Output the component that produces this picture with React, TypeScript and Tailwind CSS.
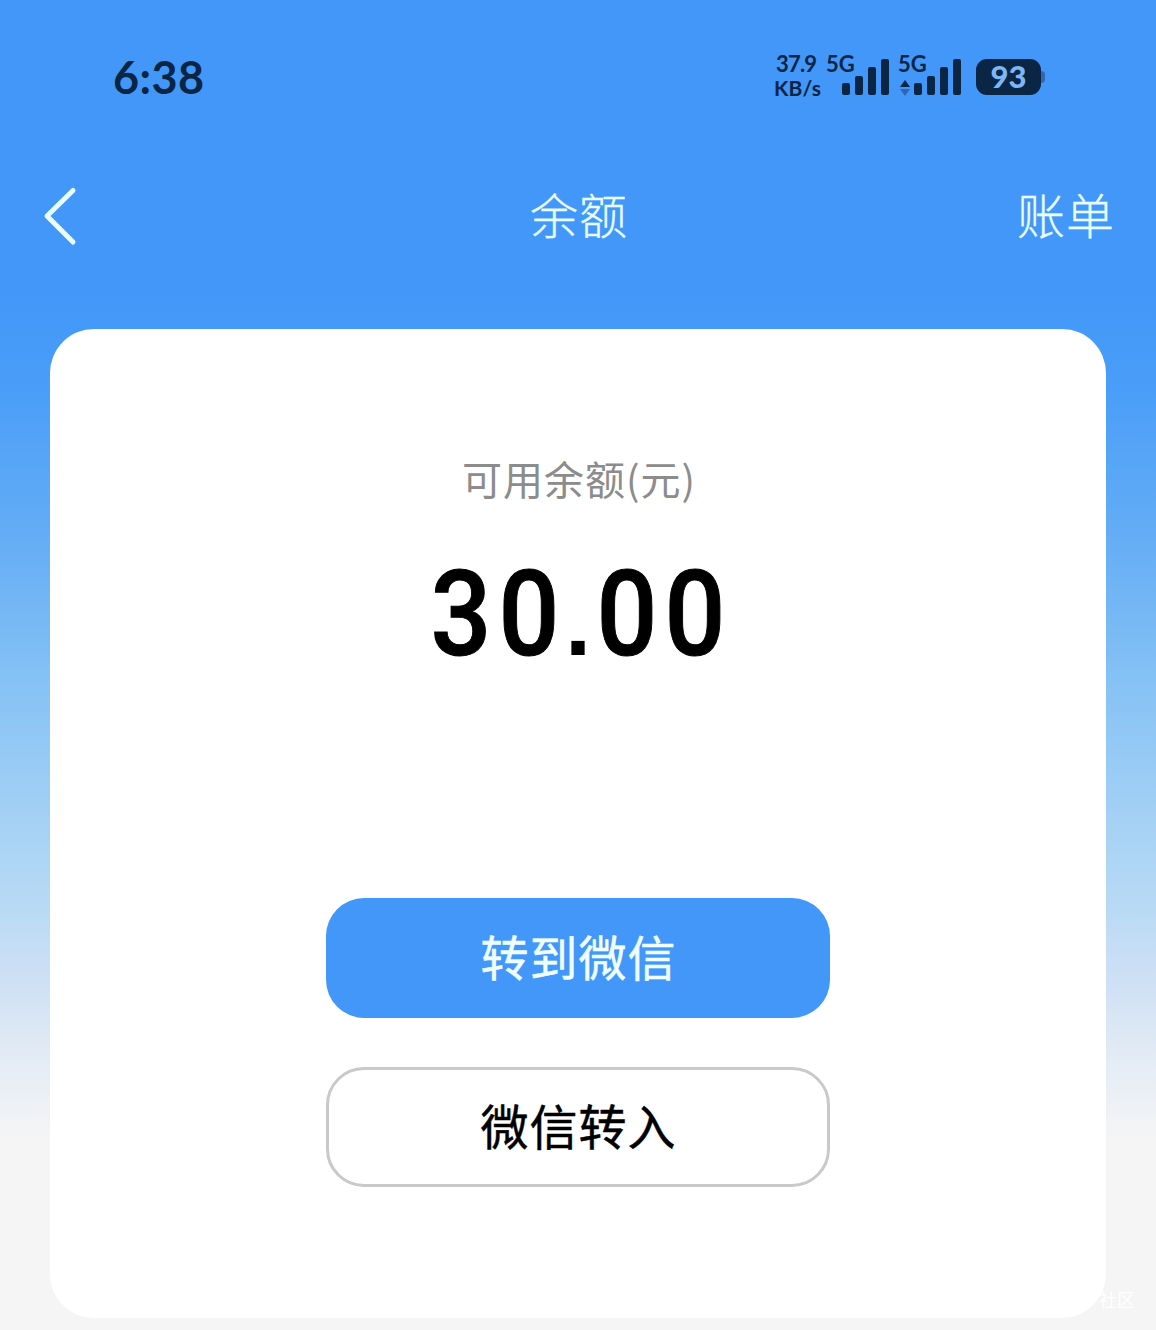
function SignalBars() {
  return (
    <svg width="47" height="37" viewBox="0 0 47 37" fill="#0b2545">
      <rect x="0" y="24" width="8" height="12" rx="2" />
      <rect x="13" y="17" width="8" height="19" rx="2" />
      <rect x="26" y="8" width="8" height="28" rx="2" />
      <rect x="39" y="0" width="8" height="36" rx="2" />
    </svg>
  );
}

function StatusBar() {
  return (
    <div className="flex h-[156px] shrink-0 items-start justify-between pl-[113px] pr-[111px] font-['Lato','Liberation_Sans',sans-serif] font-bold text-[#0b2545]">
      <div className="mt-[49px] text-[45px] leading-[56px] tracking-[0.4px]">6:38</div>
      <div className="mt-[52px] flex">
        <div className="w-[51px] text-[22px] leading-[24px]">
          <div className="pl-[2px] tracking-[-0.8px]">37.9</div>
          <div className="text-[21px] tracking-[0.2px]">KB/s</div>
        </div>
        <div className="relative w-[72px] pl-[17px] pt-[7px]">
          <span className="absolute left-px top-0 text-[22px] leading-[24px]">5G</span>
          <SignalBars />
        </div>
        <div className="relative w-[79px] pl-[17px] pt-[7px]">
          <span className="absolute left-px top-0 text-[22px] leading-[24px]">5G</span>
          <svg className="absolute left-[3px] top-[28px]" width="10" height="16" viewBox="0 0 10 16">
            <path d="M5 0 10 7H0z" fill="#0b2545" />
            <path d="M5 16 0 9h10z" fill="#2f67af" />
          </svg>
          <SignalBars />
        </div>
        <div className="mt-[7px] flex h-[36px] items-center">
          <div className="flex h-[36px] w-[65px] items-center justify-center rounded-[11px] bg-[#0b2545] pb-[2px] text-[31px] font-black leading-none text-[#7db5f5]">
            93
          </div>
          <div className="h-[12px] w-[4px] rounded-r-[4px] bg-[#2f67af]" />
        </div>
      </div>
    </div>
  );
}

function NavBar() {
  return (
    <div className="grid h-[173px] shrink-0 grid-cols-3 items-start pl-[43px] pr-[41px] pt-[27px] text-[48px] font-light leading-[60px] tracking-[1px] text-[#e9ffff] [-webkit-text-stroke:0.3px_#e9ffff]">
      <svg className="mt-[3px]" width="34" height="60" viewBox="0 0 34 60" fill="none">
        <path
          d="M30 4.500 4 30 30 56"
          stroke="currentColor"
          strokeWidth="5"
          strokeLinecap="round"
          strokeLinejoin="round"
        />
      </svg>
      <div className="text-center">余额</div>
      <div className="text-right">账单</div>
    </div>
  );
}

// 金额: 数字等宽排列, 小数点占位更窄
function Amount({ value }: { value: string }) {
  return (
    <div className="mt-[37px] flex h-[140px] items-baseline justify-center font-['Roboto',sans-serif] text-[119px] font-medium leading-[140px] text-black">
      {value.split("").map((char, i) =>
        char === "." ? (
          <span key={i} className="w-[30px] text-center font-['Liberation_Sans',sans-serif] text-[94px] font-bold">
            {char}
          </span>
        ) : (
          <span key={i} className="w-[68px] scale-x-[0.9] text-center [-webkit-text-stroke:1px_black]">
            {char}
          </span>
        )
      )}
    </div>
  );
}

export default function App() {
  return (
    <div className="relative flex h-[1330px] w-[1156px] flex-col overflow-hidden bg-[linear-gradient(180deg,#4297f8_0px,#4297f8_290px,#4a9ef8_390px,#66aef5_546px,#86c2f4_684px,#a5d1f4_822px,#b9daf5_910px,#cee0f4_980px,#e4ecf5_1063px,#f5f5f5_1140px)] font-['Noto_Sans_CJK_SC',sans-serif]">
      <StatusBar />
      <NavBar />
      <main className="mx-[50px] flex h-[989px] shrink-0 flex-col items-center rounded-[44px] bg-white pt-[119px]">
        <div className="pl-[2px] text-[40px] leading-[60px] tracking-[1px] text-[#8c8c8c]">可用余额(元)</div>
        <Amount value="30.00" />
        <button className="mt-[213px] h-[120px] w-[504px] rounded-[38px] bg-[#4297f8] pb-[6px] pl-px text-[48px] tracking-[1px] text-[#f0ffff] [-webkit-text-stroke:0.5px_#f0ffff]">
          转到微信
        </button>
        <button className="mt-[49px] h-[120px] w-[504px] rounded-[38px] border-[3px] border-[#c9c9c9] pb-[6px] pl-px text-[48px] tracking-[1px] text-black [-webkit-text-stroke:0.5px_black]">
          微信转入
        </button>
      </main>
      <div className="absolute bottom-[20px] right-[21px] text-[18px] leading-[22px] text-white">社区</div>
    </div>
  );
}
